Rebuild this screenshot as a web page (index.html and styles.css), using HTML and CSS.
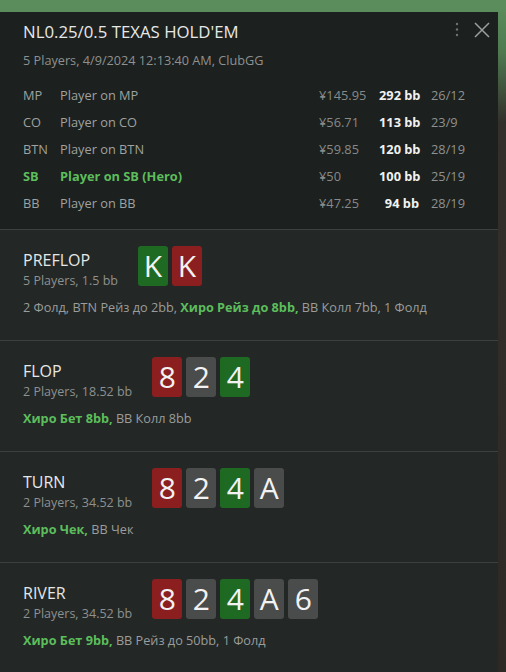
FILE: index.html
```html
<!DOCTYPE html>
<html>
<head>
<meta charset="utf-8">
<link rel="stylesheet" href="styles.css">
</head>
<body>
<div class="topbar"></div>
<div class="frame">
  <div class="panel">
    <header class="head">
      <div class="head-top">
        <h1 class="title">NL0.25/0.5 TEXAS HOLD'EM</h1>
        <div class="tools">
          <svg class="kebab" width="6" height="16" viewBox="0 0 6 16"><circle cx="3" cy="2" r="1.2"/><circle cx="3" cy="7.5" r="1.2"/><circle cx="3" cy="13" r="1.2"/></svg>
          <svg class="close" width="16" height="16" viewBox="0 0 16 16"><path d="M1 1L15 15M15 1L1 15"/></svg>
        </div>
      </div>
      <div class="subtitle">5 Players, 4/9/2024 12:13:40 AM, ClubGG</div>
      <div class="players">
        <div class="row"><span class="pos">MP</span><span class="name">Player on MP</span><span class="money">¥145.95</span><span class="bb">292 bb</span><span class="ratio">26/12</span></div>
        <div class="row"><span class="pos">CO</span><span class="name">Player on CO</span><span class="money">¥56.71</span><span class="bb">113 bb</span><span class="ratio">23/9</span></div>
        <div class="row"><span class="pos">BTN</span><span class="name">Player on BTN</span><span class="money">¥59.85</span><span class="bb">120 bb</span><span class="ratio">28/19</span></div>
        <div class="row hero"><span class="pos">SB</span><span class="name">Player on SB (Hero)</span><span class="money">¥50</span><span class="bb">100 bb</span><span class="ratio">25/19</span></div>
        <div class="row"><span class="pos">BB</span><span class="name">Player on BB</span><span class="money">¥47.25</span><span class="bb">94 bb</span><span class="ratio">28/19</span></div>
      </div>
    </header>

    <section class="street">
      <div class="street-top">
        <div class="street-info">
          <div class="street-name">PREFLOP</div>
          <div class="street-sub">5 Players, 1.5 bb</div>
        </div>
        <div class="cards"><span class="card green">K</span><span class="card red">K</span></div>
      </div>
      <div class="actions">2 Фолд, BTN Рейз до 2bb, <b class="hero-act">Хиро Рейз до 8bb,</b> BB Колл 7bb, 1 Фолд</div>
    </section>

    <section class="street">
      <div class="street-top">
        <div class="street-info">
          <div class="street-name">FLOP</div>
          <div class="street-sub">2 Players, 18.52 bb</div>
        </div>
        <div class="cards"><span class="card red">8</span><span class="card gray">2</span><span class="card green">4</span></div>
      </div>
      <div class="actions"><b class="hero-act">Хиро Бет 8bb,</b> BB Колл 8bb</div>
    </section>

    <section class="street">
      <div class="street-top">
        <div class="street-info">
          <div class="street-name">TURN</div>
          <div class="street-sub">2 Players, 34.52 bb</div>
        </div>
        <div class="cards"><span class="card red">8</span><span class="card gray">2</span><span class="card green">4</span><span class="card gray">A</span></div>
      </div>
      <div class="actions"><b class="hero-act">Хиро Чек,</b> BB Чек</div>
    </section>

    <section class="street">
      <div class="street-top">
        <div class="street-info">
          <div class="street-name">RIVER</div>
          <div class="street-sub">2 Players, 34.52 bb</div>
        </div>
        <div class="cards"><span class="card red">8</span><span class="card gray">2</span><span class="card green">4</span><span class="card gray">A</span><span class="card gray">6</span></div>
      </div>
      <div class="actions"><b class="hero-act">Хиро Бет 9bb,</b> BB Рейз до 50bb, 1 Фолд</div>
    </section>
  </div>
  <div class="edge"></div>
</div>
</body>
</html>
```

FILE: styles.css
```css
* { box-sizing: border-box; }
html, body { margin: 0; padding: 0; }
body {
  width: 506px;
  height: 672px;
  overflow: hidden;
  background: #232725;
  font-family: "Open Sans", "Noto Sans", sans-serif;
  color: #a3a6a4;
}
.topbar {
  height: 12px;
  background: #5b8c5c;
}
.frame {
  display: flex;
  height: 660px;
}
.panel {
  width: 498px;
  background: #232725;
}
.edge {
  width: 8px;
  background: linear-gradient(#5a8a5b 0, #4f7a50 40px, #33302b 110px, #2d2925 100%);
}
.head {
  background: #1c201e;
  padding: 8px 0 11px 23px;
  border-bottom: 1px solid #3c403e;
  height: 218px;
}
.head-top {
  display: flex;
  justify-content: space-between;
  align-items: flex-start;
}
.title {
  margin: 0;
  font-size: 16.8px;
  font-weight: 400;
  line-height: 24px;
  color: #e6e8e7;
}
.tools {
  display: flex;
  align-items: center;
  gap: 14px;
  padding: 2px 8px 0 0;
}
.kebab circle { fill: #6f7371; }
.close path { stroke: #9b9e9c; stroke-width: 1.5; fill: none; }
.subtitle {
  margin-top: 7px;
  font-size: 12.7px;
  line-height: 18px;
  color: #8e9190;
}
.players {
  margin-top: 13px;
}
.row {
  display: grid;
  grid-template-columns: 37px 259px 60px 40px 12px auto;
  font-size: 12.8px;
  line-height: 27px;
  color: #9fa2a0;
}
.row .pos { grid-column: 1; }
.row .name { grid-column: 2; }
.row .money { grid-column: 3; color: #878a88; }
.row .bb { grid-column: 4; text-align: right; font-weight: 700; color: #f0f2f1; white-space: nowrap; }
.row .ratio { grid-column: 6; color: #8e9190; }
.row.hero .pos, .row.hero .name { color: #5cbd5c; font-weight: 700; }
.street {
  padding: 16px 0 0 23px;
  height: 111px;
  border-bottom: 1px solid #3c403e;
}
.street-top {
  display: flex;
  align-items: flex-start;
  gap: 20px;
}
.street-info {
  padding-top: 3px;
}
.street-name {
  font-size: 16px;
  line-height: 22px;
  color: #e6e8e7;
}
.street-sub {
  margin-top: 1px;
  font-size: 12.5px;
  line-height: 18px;
  color: #8e9190;
}
.cards {
  display: flex;
  gap: 4px;
}
.card {
  width: 30px;
  height: 40px;
  border-radius: 3px;
  display: flex;
  align-items: center;
  justify-content: center;
  font-size: 30px;
  line-height: 40px;
  color: #f2f2f2;
}
.card.green { background: #1f6a22; }
.card.red { background: #8b1e1f; }
.card.gray { background: #4a4b4b; }
.actions {
  margin-top: 8px;
  font-size: 12.7px;
  line-height: 18px;
  color: #9a9d9b;
}
.hero-act {
  color: #5cbd5c;
  font-weight: 700;
}
```
